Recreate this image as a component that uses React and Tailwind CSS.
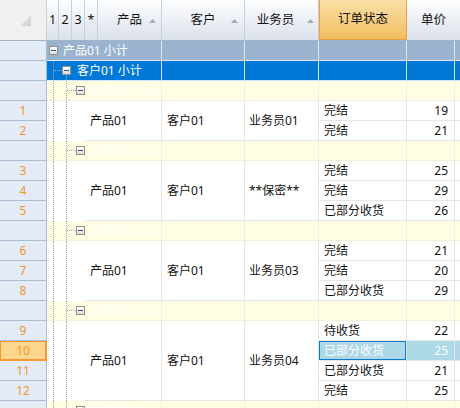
// Pivot-style grouped grid: 产品 → 客户 → 业务员 with order rows

const LINE = 'border-[#e6e6e6]'
const DOT = 'border-dotted border-[#a3a3a3]'

const GROUPS = [
  { label: '业务员01 小计', rep: '业务员01', rows: [['完结', 19, 1], ['完结', 21, 2]] },
  { label: '业务员02 小计', rep: '**保密**', rows: [['完结', 25, 3], ['完结', 29, 4], ['已部分收货', 26, 5]] },
  { label: '业务员03 小计', rep: '业务员03', rows: [['完结', 21, 6], ['完结', 20, 7], ['已部分收货', 29, 8]] },
  {
    label: '业务员04 小计',
    rep: '业务员04',
    rows: [['待收货', 22, 9], ['已部分收货', 25, 10, true], ['已部分收货', 21, 11], ['完结', 25, 12]],
  },
]

// ── Small drawings ───────────────────────────────────────────────────────────

function MinusBox() {
  return (
    <div className="w-[9px] h-[9px] shrink-0 self-center border border-[#8f8f8f] bg-linear-to-b from-white to-[#dedede] flex items-center justify-center">
      <div className="w-[5px] h-px bg-[#34507e]" />
    </div>
  )
}

function SortArrow() {
  return (
    <svg width="7" height="4" viewBox="0 0 7 4" className="shrink-0">
      <polygon points="3.5,0 7,4 0,4" fill="#a4acbb" />
    </svg>
  )
}

// tree node column: box with an optional line dropping from its centre
function Node({ down }) {
  return (
    <div className="w-[9px] shrink-0 flex flex-col items-center">
      <div className="flex-1" />
      <MinusBox />
      <div className={`flex-1 w-0 ${down ? `border-l ${DOT}` : ''}`} />
    </div>
  )
}

function Connector({ w }) {
  return (
    <div className={`shrink-0 border-l ${DOT} flex items-center`} style={{ width: w }}>
      <div className={`w-full border-t ${DOT}`} />
    </div>
  )
}

// ── Header ───────────────────────────────────────────────────────────────────

function Head({ w, children, className = '' }) {
  return (
    <div
      className={`shrink-0 h-full flex items-center justify-center border-r border-[#c6cfdb] bg-linear-to-b from-[#fdfeff] to-[#dbe1eb] ${className}`}
      style={w ? { width: w } : undefined}
    >
      {children}
    </div>
  )
}

function Header() {
  return (
    <div className="flex h-[41px] border-b border-[#a3b3c7] text-[12.5px] text-[#111]">
      <div className="w-[47px] shrink-0 h-full bg-[#f0f0f0] border-r border-[#c9cfd6] pl-[20px] pt-[15px]">
        <svg width="11" height="11" viewBox="0 0 11 11">
          <defs>
            <linearGradient id="cg" x1="0" y1="0" x2="1" y2="1">
              <stop offset="0" stopColor="#ececec" />
              <stop offset="1" stopColor="#cfcfcf" />
            </linearGradient>
          </defs>
          <polygon points="11,0 11,11 0,11" fill="url(#cg)" />
        </svg>
      </div>
      <Head w={12}>1</Head>
      <Head w={13}>2</Head>
      <Head w={13}>3</Head>
      <Head w={13}>*</Head>
      <Head w={64} className="relative">
        产品
        <span className="absolute right-[5px] top-[19px] flex"><SortArrow /></span>
      </Head>
      <Head w={83} className="relative">
        客户
        <span className="absolute right-[6px] top-[19px] flex"><SortArrow /></span>
      </Head>
      <Head w={74} className="relative pr-[12px]">
        业务员
        <span className="absolute right-[4px] top-[19px] flex"><SortArrow /></span>
      </Head>
      <div className="w-[88px] shrink-0 h-full flex items-center justify-center border-x border-b border-[#ee9f45] bg-linear-to-b from-[#fbdfa8] to-[#f2be5c]">
        订单状态
      </div>
      <Head className="flex-1 border-r-0">单价</Head>
    </div>
  )
}

// ── Rows ─────────────────────────────────────────────────────────────────────

function RowHead({ n, active }) {
  return (
    <div
      className={`h-[20px] w-[47px] shrink-0 flex items-center justify-center border-b border-r text-[12px] text-[#f2962a] ${
        active
          ? 'bg-[#fdd68e] border-[#f39a34] shadow-[inset_0_0_0_1px_#f39a34]'
          : 'bg-[#e3ebf7] border-[#a9bdd5]'
      }`}
    >
      {n}
    </div>
  )
}

function TailCells({ line, cls = '' }) {
  return (
    <>
      <div className={`w-[83px] shrink-0 border-r ${line} ${cls}`} />
      <div className={`w-[74px] shrink-0 border-r ${line} ${cls}`} />
      <div className={`w-[88px] shrink-0 border-r ${line} ${cls}`} />
      <div className={`w-[48px] shrink-0 border-r ${line} ${cls}`} />
      <div className="flex-1" />
    </>
  )
}

function ProductRow() {
  return (
    <div className="flex h-[20px]">
      <RowHead />
      <div className="flex flex-1 bg-[#9ab3cf] border-b border-white/70">
        <div className="w-[115px] shrink-0 flex border-r border-white/70">
          <div className="w-[2px] shrink-0" />
          <Node down />
          <span className="self-center pl-[5px] text-white whitespace-nowrap">产品01 小计</span>
        </div>
        <TailCells line="border-white/70" />
      </div>
    </div>
  )
}

function CustomerRow() {
  return (
    <div className="flex h-[20px]">
      <RowHead />
      <div className="flex flex-1 bg-[#0078d7] border-b border-white/80">
        <div className="w-[115px] shrink-0 flex border-r border-white/80">
          <div className="w-[6px] shrink-0" />
          <Connector w={9} />
          <Node down />
          <span className="self-center pl-[6px] text-white whitespace-nowrap">客户01 小计</span>
        </div>
        <TailCells line="border-white/80" />
      </div>
    </div>
  )
}

function RepRow({ label }) {
  return (
    <div className="flex h-[20px]">
      <RowHead />
      <div className="flex flex-1 bg-[#fffee2] border-b border-[#efefdc]">
        <div className="w-[6px] shrink-0" />
        <div className={`w-[13px] shrink-0 border-l ${DOT}`} />
        <Connector w={10} />
        <MinusBox />
        <div className="w-[77px] shrink-0 flex items-center pl-[5px] text-white whitespace-nowrap overflow-hidden border-r border-[#efefdc]">
          {label}
        </div>
        <TailCells line="border-[#efefdc]" />
      </div>
    </div>
  )
}

function DataBlock({ rep, rows }) {
  return (
    <div className="flex">
      <div className="flex flex-col">
        {rows.map(([, , n, sel]) => (
          <RowHead key={n} n={n} active={sel} />
        ))}
      </div>
      <div className="flex flex-1">
        <div className="w-[6px] shrink-0" />
        <div className={`w-[13px] shrink-0 border-l ${DOT}`} />
        <div className={`w-[19px] shrink-0 border-l ${DOT}`} />
        <div className={`w-[77px] shrink-0 flex items-center pl-[5px] border-r border-b ${LINE}`}>产品01</div>
        <div className={`w-[83px] shrink-0 flex items-center pl-[5px] border-r border-b ${LINE}`}>客户01</div>
        <div className={`w-[74px] shrink-0 flex items-center pl-[4px] border-r border-b ${LINE}`}>{rep}</div>
        <div className="flex-1 flex flex-col">
          {rows.map(([status, price, n, sel]) => (
            <div key={n} className={`flex h-[20px] border-b ${LINE}`}>
              <div
                className={`w-[88px] shrink-0 flex items-center pl-[5px] border-r ${LINE} ${
                  sel ? 'bg-[#add8e6] text-white shadow-[inset_0_0_0_1px_#0a7ad6]' : ''
                }`}
              >
                {status}
              </div>
              <div
                className={`w-[48px] shrink-0 flex items-center justify-end pr-[6px] border-r ${LINE} ${
                  sel ? 'bg-[#add8e6] text-white' : ''
                }`}
              >
                {price}
              </div>
              <div className={`flex-1 ${sel ? 'bg-[#add8e6]' : ''}`} />
            </div>
          ))}
        </div>
      </div>
    </div>
  )
}

export default function App() {
  return (
    <div className="w-[460px] h-[408px] overflow-hidden bg-white text-[12px] leading-none text-[#111] font-['Noto_Sans','Noto_Sans_CJK_SC',sans-serif] select-none">
      <Header />
      <ProductRow />
      <CustomerRow />
      {GROUPS.map((g) => (
        <div key={g.label}>
          <RepRow label={g.label} />
          <DataBlock rep={g.rep} rows={g.rows} />
        </div>
      ))}
      <RepRow label="业务员05 小计" />
    </div>
  )
}
